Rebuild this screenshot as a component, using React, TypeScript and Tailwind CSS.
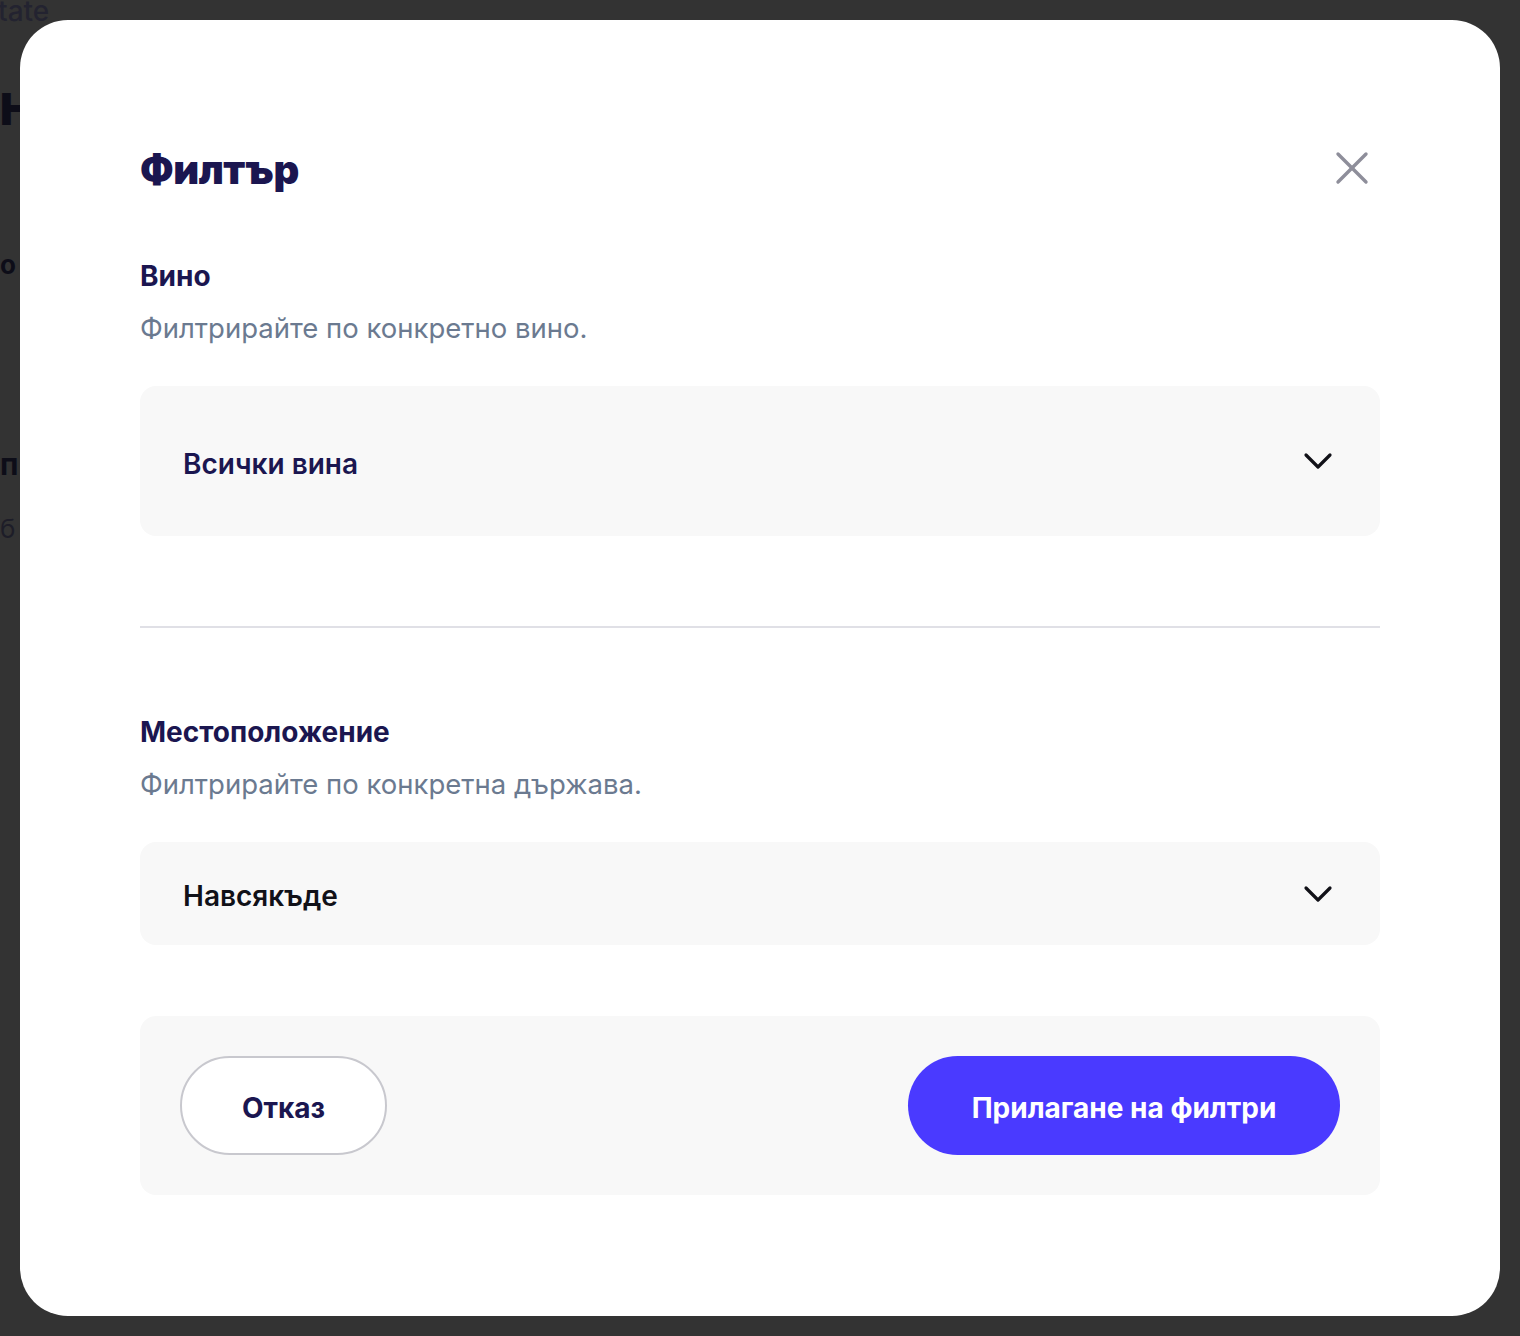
import { X, ChevronDown } from 'lucide-react';

const font = { fontFamily: 'Inter, "Noto Sans", sans-serif' };

function Select({ label, tall, dark }: { label: string; tall?: boolean; dark?: boolean }) {
  return (
    <div
      className={`flex items-center justify-between rounded-[16px] bg-[#f8f8f8] pl-[43px] pr-[38px] ${
        tall ? 'h-[150px]' : 'h-[103px]'
      }`}
    >
      <span
        className={`pt-[5px] text-[28px] leading-[34px] font-semibold ${dark ? 'text-[#111118]' : 'text-[#1b1650]'}`}
      >
        {label}
      </span>
      <ChevronDown className="w-[48px] h-[48px] text-[#111118]" strokeWidth={1.6} />
    </div>
  );
}

function Section({ title, hint }: { title: string; hint: string }) {
  return (
    <>
      <h3 className="text-[28px] leading-[34px] font-bold text-[#1b1650]">{title}</h3>
      <p className="mt-[18px] text-[27.5px] leading-[34px] text-[#6b7a90]">{hint}</p>
    </>
  );
}

export default function App() {
  return (
    <div className="relative h-[1336px] w-full overflow-hidden bg-[#333333]" style={font}>
      {/* dimmed page behind the dialog */}
      <div className="flex flex-col text-[#1d1d28]">
        <span className="-ml-[2px] -mt-[6px] text-[28px] leading-[34px] font-medium text-[#232330]">tate</span>
        <span className="mt-[59px] text-[44px] leading-[44px] font-black text-[#0d0d18]">H</span>
        <span className="mt-[114px] text-[26px] font-bold text-[#0d0d18]">о</span>
        <span className="mt-[158px] text-[30px] font-bold text-[#0d0d18]">п</span>
        <span className="mt-[22px] text-[26px] text-[#1d1d28]">б</span>
      </div>

      <div className="absolute inset-0 flex p-[20px]">
        <div className="flex-1 rounded-[48px] bg-white px-[120px] pt-[120px]">
          <div className="flex h-[60px] items-center justify-between">
            <h2 className="text-[40px] font-black tracking-[-0.5px] text-[#1b1650]">Филтър</h2>
            <X className="mb-[4px] w-[56px] h-[56px] text-[#8e8e9a]" strokeWidth={1.45} />
          </div>

          <div className="mt-[59px]">
            <Section title="Вино" hint="Филтрирайте по конкретно вино." />
          </div>
          <div className="mt-[41px]">
            <Select label="Всички вина" tall />
          </div>

          <div className="mt-[90px] h-[2px] bg-[#e0e0e6]" />

          <div className="mt-[87px]">
            <Section title="Местоположение" hint="Филтрирайте по конкретна държава." />
          </div>
          <div className="mt-[41px]">
            <Select label="Навсякъде" dark />
          </div>

          <div className="mt-[71px] flex items-center justify-between rounded-[16px] bg-[#f8f8f8] p-[40px]">
            <button className="h-[99px] w-[207px] rounded-full border-2 border-[#c8c8ce] bg-white pt-[4px] text-[28px] font-bold text-[#1b1650]">
              Отказ
            </button>
            <button className="h-[99px] w-[432px] rounded-full bg-[#4a3aff] pt-[4px] text-[28px] font-bold text-white">
              Прилагане на филтри
            </button>
          </div>
        </div>
      </div>
    </div>
  );
}
